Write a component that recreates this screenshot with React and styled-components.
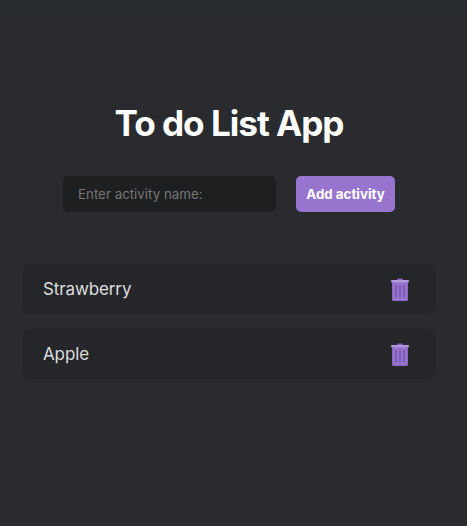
import React, { useState } from "react";
import styled, { createGlobalStyle } from "styled-components";

const GlobalStyle = createGlobalStyle`
  * { box-sizing: border-box; }
  body {
    margin: 0;
    background: #2a2b2e;
    font-family: Inter, "Liberation Sans", sans-serif;
  }
`;

const Page = styled.main`
  min-height: 526px;
  padding: 102px 31px 0 22px;
  background: linear-gradient(#282c30 14px, #2a2b2e 17px);
`;

const Title = styled.h1`
  margin: 0;
  font-size: 35.2px;
  line-height: 43px;
  font-weight: 700;
  letter-spacing: -1.05px;
  text-align: center;
  white-space: nowrap;
  color: #fff;
`;

const Form = styled.form`
  display: flex;
  justify-content: center;
  gap: 20px;
  margin-top: 31px;
`;

const Input = styled.input`
  width: 213px;
  height: 36px;
  padding: 0 15px;
  border: 0;
  border-radius: 5px;
  outline: 0;
  background: #1e1f21;
  color: #ddd;
  font: 400 13.33px Inter, sans-serif;
  &::placeholder { color: #757575; opacity: 1; }
`;

const AddButton = styled.button`
  width: 99px;
  height: 36px;
  padding: 0;
  border: 0;
  border-radius: 5px;
  background: #9775cf;
  color: #fff;
  font: 700 13.33px Inter, sans-serif;
  white-space: nowrap;
`;

const List = styled.ul`
  display: flex;
  flex-direction: column;
  gap: 15px;
  margin: 52px 0 0;
  padding: 0;
  list-style: none;
`;

const Item = styled.li`
  display: flex;
  align-items: center;
  justify-content: space-between;
  height: 50px;
  padding: 0 26px 0 21px;
  border-radius: 9px;
  background: #252629;
  color: #ddd;
  font-size: 17px;
  letter-spacing: -0.12px;
`;

const DeleteButton = styled.button`
  display: flex;
  padding: 1px 0 0;
  border: 0;
  background: none;
`;

const TrashIcon = () => (
  <svg width="20" height="24" viewBox="0 0 20 24">
    <path d="M7 2.5V1.3Q7 .5 7.8 .5h4.4q.8 0 .8 .8v1.2z" fill="#8562b9" />
    <path d="M2 4h16v17.2q0 1.8-1.8 1.8H3.8Q2 23 2 21.2z" fill="#9775cf" />
    <path d="M2.5 4v17q0 1.6 1.6 1.6h11.8q1.6 0 1.6-1.6V4" fill="none" stroke="#8965c0" />
    <path d="M6 7v12.5M10 7v12.5M14 7v12.5" stroke="#7a55b2" strokeWidth="1.7" />
    <rect x="1" y="2" width="18" height="2.3" rx=".4" fill="#b397dc" />
  </svg>
);

export default function App() {
  const [items, setItems] = useState(["Strawberry", "Apple"]);
  const [name, setName] = useState("");
  const add = (event) => {
    event.preventDefault();
    if (!name.trim()) return;
    setItems([...items, name.trim()]);
    setName("");
  };
  return (
    <>
      <GlobalStyle />
      <Page>
        <Title>To do List App</Title>
        <Form onSubmit={add}>
          <Input
            placeholder="Enter activity name:"
            value={name}
            onChange={(event) => setName(event.target.value)}
          />
          <AddButton type="submit">Add activity</AddButton>
        </Form>
        <List>
          {items.map((item, index) => (
            <Item key={index}>
              <span>{item}</span>
              <DeleteButton
                aria-label={`Delete ${item}`}
                onClick={() => setItems(items.filter((_, i) => i !== index))}
              >
                <TrashIcon />
              </DeleteButton>
            </Item>
          ))}
        </List>
      </Page>
    </>
  );
}
